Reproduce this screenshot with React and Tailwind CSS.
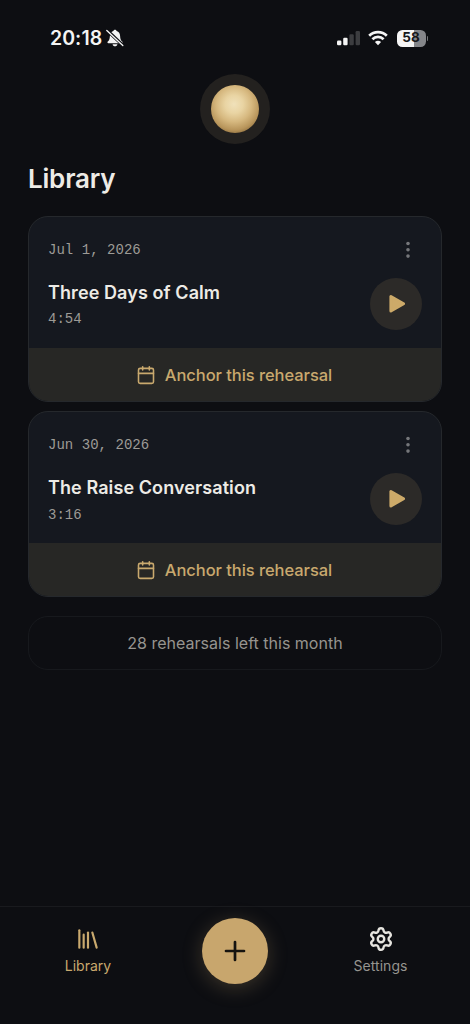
import React from "react";
import { Library, Settings, Calendar } from "lucide-react";

const rehearsals = [
  { date: "Jul 1, 2026", title: "Three Days of Calm", length: "4:54" },
  { date: "Jun 30, 2026", title: "The Raise Conversation", length: "3:16" },
];

function StatusBar() {
  return (
    <div className="flex h-[76px] items-center pl-[50px] pr-[42px]">
      <span className="text-[19.5px] font-semibold leading-6 tracking-[0.05px] text-[#f4f4f4]">20:18</span>
      <svg className="ml-[3px] h-[20px] w-[20px]" viewBox="0 0 20 20">
        <path
          d="M10 1.7c.9 0 1.5.6 1.6 1.4 2.3.7 3.4 2.5 3.5 4.9.1 3.3.8 4.4 2.1 5.6.7.7.4 1.7-.6 1.7H3.4c-1 0-1.3-1-.6-1.7C4.1 12.4 4.8 11.3 4.9 8c.1-2.4 1.2-4.2 3.5-4.9C8.5 2.3 9.1 1.7 10 1.7ZM7.6 16.2h4.8c-.2 1.3-1.2 2.1-2.4 2.1s-2.2-.8-2.4-2.1Z"
          fill="#f4f4f4"
        />
        <path d="M2.2 2.5 18 17.3" stroke="#0d0e12" strokeWidth="3.2" />
        <path d="M1.8 2.6 17.8 17.6" stroke="#f4f4f4" strokeWidth="1.4" strokeLinecap="round" />
      </svg>
      <div className="grow" />
      <svg className="h-[16px] w-[24px]" viewBox="0 0 24 16">
        <rect x="0" y="10.5" width="4.4" height="4.7" rx="1.2" fill="#f4f4f4" />
        <rect x="6.2" y="7.7" width="4.4" height="7.5" rx="1.2" fill="#f4f4f4" />
        <rect x="12.4" y="4.2" width="4.4" height="11" rx="1.2" fill="#3c3d40" />
        <rect x="18.6" y="1" width="4.4" height="14.2" rx="1.2" fill="#3c3d40" />
      </svg>
      <svg className="ml-[7px] mr-[1px] h-[16px] w-[20px]" viewBox="0 0 20 16" fill="none" stroke="#f4f4f4" strokeWidth="2.7">
        <path d="M1.2 5.7a12.6 12.6 0 0 1 17.6 0" />
        <path d="M4.4 9.2a8 8 0 0 1 11.2 0" />
        <path d="M10 15.3 6.9 12.1a4.5 4.5 0 0 1 6.2 0Z" fill="#f4f4f4" stroke="none" />
      </svg>
      <div className="ml-[8px] flex h-[17px] w-[29px] items-center justify-center rounded-[5.5px] bg-[linear-gradient(90deg,#f5f5f5_58%,#85868a_58%)] text-[13.5px] font-bold leading-none text-[#17181b]">
        58
      </div>
      <div className="ml-[1px] h-[5px] w-[1.5px] rounded-r-full bg-[#77787b]" />
    </div>
  );
}

function Orb() {
  return (
    <div className="mx-auto -mt-[2px] flex h-[70px] w-[70px] items-center justify-center rounded-full bg-[#23211f]">
      <div className="h-[48px] w-[48px] rounded-full bg-[radial-gradient(circle_32px_at_48%_40%,#f0e1ba_0%,#e9d4a3_28%,#d6b87f_55%,#b8955b_80%,#846638_100%)]" />
    </div>
  );
}

function RehearsalCard({ item }) {
  return (
    <article className="h-[186px] overflow-hidden rounded-[20px] border border-[#25282c] bg-[#15181f]">
      <div className="h-[131px] px-[19px] pt-[23px]">
        <div className="flex h-5 items-center justify-between">
          <span className="font-['Liberation_Mono',monospace] text-[14px] leading-5 tracking-[0.03px] text-[#9d9b96]">{item.date}</span>
          <svg className="mr-[11px] h-[20px] w-[6px]" viewBox="0 0 6 20" fill="#75767a">
            <circle cx="3" cy="3.5" r="1.8" />
            <circle cx="3" cy="9.8" r="1.8" />
            <circle cx="3" cy="16.1" r="1.8" />
          </svg>
        </div>
        <div className="mt-[17.5px] flex justify-between">
          <div className="pt-[3px]">
            <h2 className="text-[18px] font-semibold leading-6 tracking-[0.09px] text-[#edebe6]">{item.title}</h2>
            <p className="mt-[5.9px] font-['Liberation_Mono',monospace] text-[14px] leading-[18px] text-[#9d9b96]">{item.length}</p>
          </div>
          <button aria-label="Play" className="flex h-[52px] w-[52px] items-center justify-center rounded-full bg-[#2c2a28]">
            <svg className="h-[22px] w-[22px]" viewBox="0 0 22 22">
              <path d="M5.9 3.6v14.4L18.6 10.8Z" fill="#cdaa69" stroke="#cdaa69" strokeWidth="3" strokeLinejoin="round" />
            </svg>
          </button>
        </div>
      </div>
      <button className="flex h-[54px] w-full items-center justify-center gap-[9px] bg-[#272725] pr-[2px] text-[#c9a96e]">
        <Calendar size={20} strokeWidth={1.9} />
        <span className="text-[16.5px] font-medium leading-6 tracking-[-0.06px]">Anchor this rehearsal</span>
      </button>
    </article>
  );
}

function BottomNav() {
  return (
    <nav className="mt-auto flex h-[118px] justify-between border-t border-[#191a1e] pl-[28px] pr-[29px]">
      <button className="flex w-[120px] flex-col items-center pt-[18.5px] text-[#c9a96e]">
        <Library size={26} strokeWidth={2} />
        <span className="mt-[4px] text-[14px] leading-5">Library</span>
      </button>
      <button aria-label="New rehearsal" className="ml-[1px] mt-[11px] flex h-[66px] w-[66px] items-center justify-center rounded-full bg-[#c8a66d] shadow-[0_4px_20px_rgba(201,169,110,0.25)]">
        <svg className="h-[24px] w-[24px]" viewBox="0 0 24 24" fill="none" stroke="#15130f" strokeWidth="2.7" strokeLinecap="round">
          <path d="M12 3v18M3 12h18" />
        </svg>
      </button>
      <button className="flex w-[121px] flex-col items-center pt-[18.5px] text-[#e6e4df]">
        <Settings size={26} strokeWidth={2.2} />
        <span className="mt-[4px] text-[14px] leading-5 tracking-[0.05px] text-[#96948f]">Settings</span>
      </button>
    </nav>
  );
}

export default function App() {
  return (
    <div className="flex h-[1024px] w-full flex-col overflow-hidden bg-[#0d0e12] font-['Inter',sans-serif]">
      <StatusBar />
      <Orb />
      <main className="px-[28px] pt-[19px]">
        <h1 className="text-[26px] font-semibold leading-8 tracking-[-0.2px] text-[#edebe6]">Library</h1>
        <div className="mt-[21px] flex flex-col gap-[9.4px]">
          {rehearsals.map((item) => (
            <RehearsalCard key={item.date} item={item} />
          ))}
        </div>
        <p className="mt-[19.1px] flex h-[53.5px] items-center justify-center rounded-[20px] border border-[#17191d] text-[16px] leading-6 tracking-[0.01px] text-[#96948f]">
          28 rehearsals left this month
        </p>
      </main>
      <BottomNav />
    </div>
  );
}
